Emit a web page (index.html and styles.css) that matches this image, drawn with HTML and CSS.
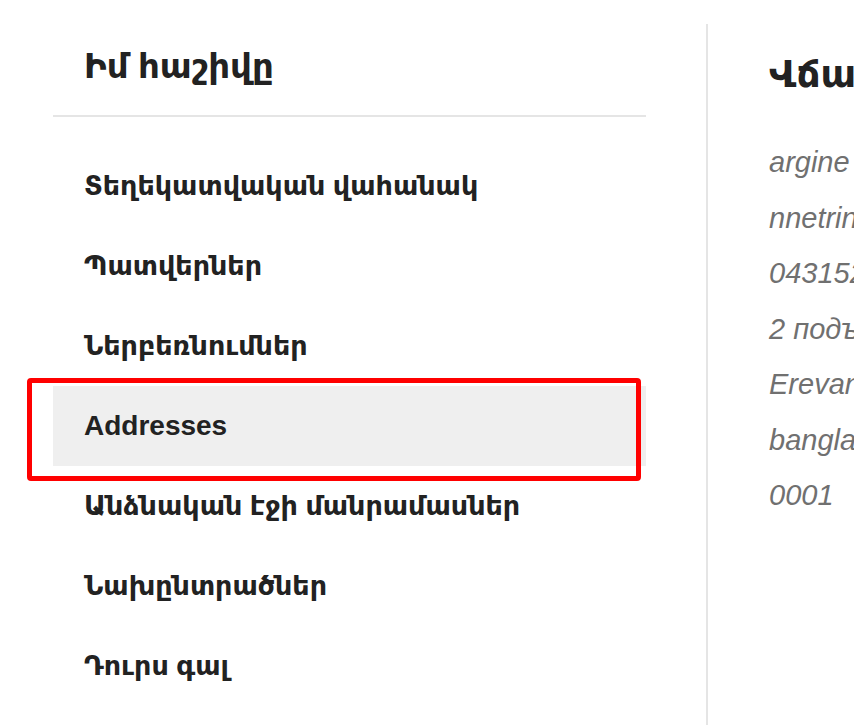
FILE: index.html
```html
<!DOCTYPE html>
<html lang="hy">
<head>
  <meta charset="UTF-8">
  <title>Իմ հաշիվը</title>
  <link rel="stylesheet" href="styles.css">
</head>
<body>
  <div class="page">
    <aside class="sidebar">
      <h2 class="sidebar-title">Իմ հաշիվը</h2>
      <nav class="nav">
        <a class="nav-item" href="#">Տեղեկատվական վահանակ</a>
        <a class="nav-item" href="#">Պատվերներ</a>
        <a class="nav-item" href="#">Ներբեռնումներ</a>
        <a class="nav-item active" href="#" lang="en">Addresses</a>
        <a class="nav-item" href="#">Անձնական էջի մանրամասներ</a>
        <a class="nav-item" href="#">Նախընտրածներ</a>
        <a class="nav-item" href="#">Դուրս գալ</a>
      </nav>
    </aside>

    <main class="content">
      <h2 class="content-title">Վճարման հասցե</h2>
      <address class="address">
        <p>argine nnetrin</p>
        <p>nnetrin company</p>
        <p>0431522334</p>
        <p>2 подъезд, 5 этаж</p>
        <p>Erevan</p>
        <p>bangladesh</p>
        <p>0001</p>
      </address>
    </main>
  </div>

  <!-- highlight around the active menu item -->
  <div class="highlight"></div>
</body>
</html>
```

FILE: styles.css
```css
body {
  margin: 0;
  font-family: "Liberation Sans", "DejaVu Sans", sans-serif;
  color: #222;
  background: #fff;
  overflow: hidden;
}
.page {
  display: flex;
  padding-top: 24px;
  height: 701px;
}
.sidebar {
  width: 593px;
  margin-left: 53px;
  flex-shrink: 0;
}
.sidebar-title {
  margin: 22px 0 0;
  padding: 0 31px 28px;
  font-size: 34px;
  line-height: 41px;
  font-weight: bold;
  border-bottom: 2px solid #e5e5e5;
}
.nav {
  display: flex;
  flex-direction: column;
  margin-top: 29px;
}
.nav-item {
  display: block;
  height: 80px;
  line-height: 80px;
  padding-left: 31px;
  font-size: 27px;
  font-weight: bold;
  color: #222;
  text-decoration: none;
  white-space: nowrap;
}
.nav-item:lang(en) {
  font-size: 28px;
}
.nav-item.active {
  background: #efefef;
}
.content {
  margin-left: 60px;
  padding-left: 61px;
  border-left: 2px solid #e5e5e5;
  white-space: nowrap;
}
.content-title {
  margin: 27px 0 0;
  font-size: 38px;
  line-height: 46px;
  font-weight: bold;
}
.address {
  margin-top: 38px;
  font-size: 29px;
  line-height: 55.5px;
  color: #707070;
}
.address p {
  margin: 0;
}
.highlight {
  position: absolute;
  left: 27px;
  top: 378px;
  width: 604px;
  height: 93px;
  border: 5px solid #ff0000;
  border-radius: 4px;
}
```
